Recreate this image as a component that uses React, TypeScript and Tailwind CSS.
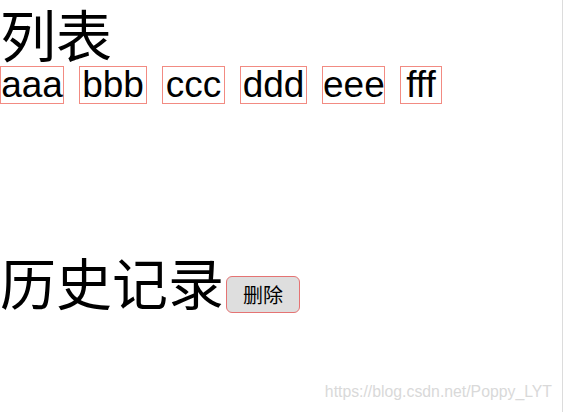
const items = [
  { label: "aaa", width: "w-[64px]" },
  { label: "bbb", width: "w-[68px]" },
  { label: "ccc", width: "w-[63px]" },
  { label: "ddd", width: "w-[67px]" },
  { label: "eee", width: "w-[63px]" },
  { label: "fff", width: "w-[42px]" },
];

export default function App() {
  return (
    <div className="relative w-[563px] h-[412px] bg-white border-r border-[#dcdcdc] text-black font-['Liberation_Sans','Noto_Sans_CJK_SC',sans-serif]">
      {/* 列表 */}
      <h1 className="text-[56px] leading-[66px] font-normal font-['Noto_Sans_CJK_SC',sans-serif]">列表</h1>
      <ul className="flex gap-[15px]">
        {items.map((item) => (
          <li
            key={item.label}
            className={`${item.width} h-[38px] border border-[#f28b82] text-center text-[37px] leading-[36px]`}
          >
            {item.label}
          </li>
        ))}
      </ul>

      {/* 历史记录 */}
      <div className="mt-[143px] flex items-end">
        <h2 className="text-[56px] leading-[68px] font-normal font-['Noto_Sans_CJK_SC',sans-serif]">历史记录</h2>
        <button className="mb-[2px] ml-[2px] w-[74px] h-[37px] rounded-[6px] border border-[#e57373] bg-[#dedede] text-[20px] leading-none font-['Noto_Sans_CJK_SC',sans-serif]">
          删除
        </button>
      </div>

      {/* watermark */}
      <span className="absolute right-[10px] bottom-[8px] text-[15.8px] text-[#d9d9d9]">
        https://blog.csdn.net/Poppy_LYT
      </span>
    </div>
  );
}
